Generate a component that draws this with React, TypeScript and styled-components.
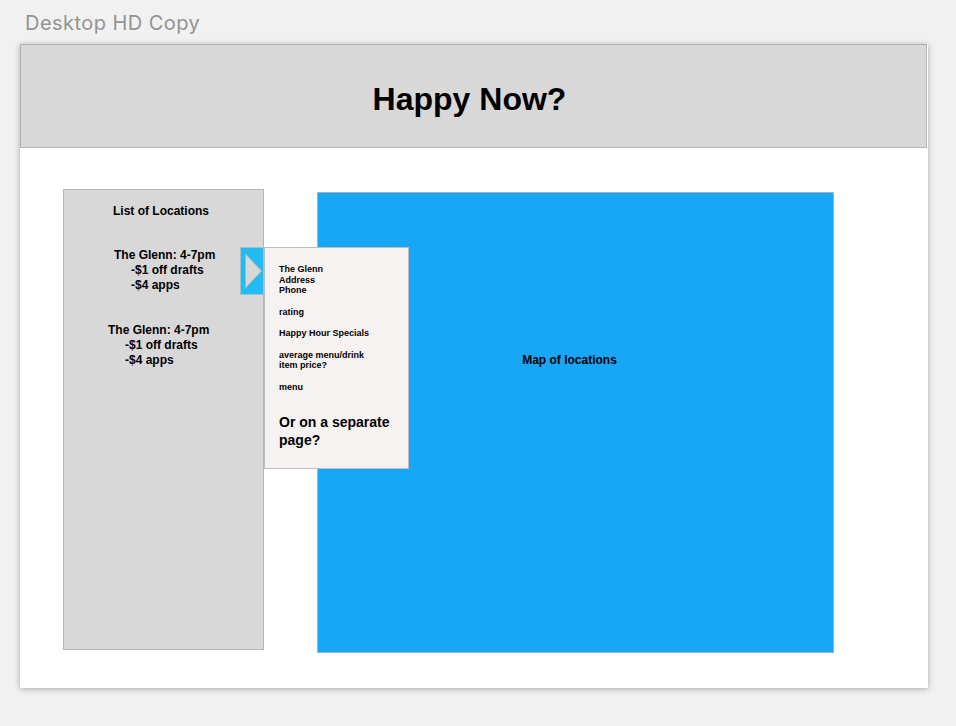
import React from 'react';
import styled, { createGlobalStyle } from 'styled-components';

const GlobalStyle = createGlobalStyle`
    html, body {
        margin: 0;
        padding: 0;
        background: #f1f1f1;
    }

    body {
        width: 956px;
        height: 726px;
        overflow: hidden;
        font-family: 'Liberation Sans', Arial, sans-serif;
    }
`;

const locations = [
    { name: 'The Glenn: 4-7pm', offset: 50 },
    { name: 'The Glenn: 4-7pm', offset: 44 },
];

export default function App() {
    return (
        <>
            <GlobalStyle />
            <Page>
                <ArtboardLabel>Desktop HD Copy</ArtboardLabel>
                <Artboard>
                    <Header>
                        <Title>Happy Now?</Title>
                    </Header>
                    <Content>
                        <Sidebar>
                            <SidebarTitle>List of Locations</SidebarTitle>
                            {locations.map((location, index) => (
                                <Location key={index} $offset={location.offset}>
                                    <span>{location.name}</span>
                                    <Special>-$1 off drafts</Special>
                                    <Special>-$4 apps</Special>
                                </Location>
                            ))}
                        </Sidebar>
                        <MapPanel>
                            <MapLabel>Map of locations</MapLabel>
                        </MapPanel>
                        <ArrowTab>
                            <svg width='18' height='36' viewBox='0 0 18 36'>
                                <polygon
                                    points='0.5,1 16.5,18 0.5,35'
                                    fill='#d8d8d8'
                                    stroke='#b4b4b4'
                                />
                            </svg>
                        </ArrowTab>
                        <DetailCard>
                            <DetailGroup>
                                <span>The Glenn</span>
                                <span>Address</span>
                                <span>Phone</span>
                            </DetailGroup>
                            <DetailGroup>rating</DetailGroup>
                            <DetailGroup>Happy Hour Specials</DetailGroup>
                            <DetailGroup>
                                <span>average menu/drink</span>
                                <span>item price?</span>
                            </DetailGroup>
                            <DetailGroup>menu</DetailGroup>
                            <CardQuestion>Or on a separate page?</CardQuestion>
                        </DetailCard>
                    </Content>
                </Artboard>
            </Page>
        </>
    );
}

const Page = styled.div`
    display: flex;
    flex-direction: column;
    padding: 11px 0 0 20px;
`;

const ArtboardLabel = styled.div`
    height: 33px;
    padding-left: 5px;
    font-family: Inter, 'Noto Sans', sans-serif;
    font-size: 20px;
    line-height: 25px;
    letter-spacing: 0.45px;
    color: #939393;
`;

const Artboard = styled.div`
    display: flex;
    flex-direction: column;
    width: 908px;
    height: 644px;
    background: #fff;
    box-shadow: 0 1px 6px rgba(0, 0, 0, 0.3);
`;

const Header = styled.header`
    display: flex;
    justify-content: center;
    box-sizing: border-box;
    width: 907px;
    height: 104px;
    padding: 36px 8px 0 0;
    background: #d8d8d8;
    border: 1px solid #b4b4b4;
`;

const Title = styled.h1`
    margin: 0;
    font-size: 32px;
    line-height: 37px;
    font-weight: 700;
    color: #000;
`;

const Content = styled.main`
    position: relative;
    display: flex;
    align-items: flex-start;
    flex: 1;
    padding: 41px 0 0 43px;
`;

const Sidebar = styled.aside`
    box-sizing: border-box;
    width: 201px;
    height: 461px;
    padding-top: 13px;
    background: #d8d8d8;
    border: 1px solid #b4b4b4;
`;

const SidebarTitle = styled.div`
    padding-left: 49px;
    font-size: 12px;
    line-height: 16px;
    font-weight: 700;
    color: #000;
`;

const Location = styled.div<{ $offset: number }>`
    display: flex;
    flex-direction: column;
    margin-top: 29px;
    padding-left: ${(props) => props.$offset}px;
    font-size: 12px;
    line-height: 15px;
    font-weight: 700;
    color: #000;

    & + & {
        margin-top: 30px;
    }
`;

const Special = styled.span`
    padding-left: 17px;
`;

const MapPanel = styled.section`
    display: flex;
    justify-content: center;
    box-sizing: border-box;
    width: 517px;
    height: 461px;
    margin: 3px 0 0 53px;
    padding: 160px 12px 0 0;
    background: #18a7f6;
    border: 1px solid #9db5c4;
`;

const MapLabel = styled.div`
    font-size: 12px;
    line-height: 15px;
    font-weight: 700;
    color: #000;
`;

const ArrowTab = styled.div`
    position: absolute;
    top: 99px;
    left: 220px;
    display: flex;
    align-items: center;
    box-sizing: border-box;
    width: 24px;
    height: 48px;
    padding-left: 4px;
    background: #22bcf3;
    border: 1px solid #9fc2d3;
`;

const DetailCard = styled.div`
    position: absolute;
    top: 99px;
    left: 244px;
    display: flex;
    flex-direction: column;
    box-sizing: border-box;
    width: 145px;
    height: 222px;
    padding: 16px 8px 0 14px;
    background: #f7f2f2;
    border: 1px solid #bdbdbd;
`;

const DetailGroup = styled.div`
    display: flex;
    flex-direction: column;
    margin-bottom: 11px;
    font-size: 9px;
    line-height: 10.5px;
    font-weight: 700;
    color: #000;
`;

const CardQuestion = styled.div`
    margin-top: 10px;
    font-size: 14px;
    line-height: 18px;
    font-weight: 700;
    color: #000;
`;
